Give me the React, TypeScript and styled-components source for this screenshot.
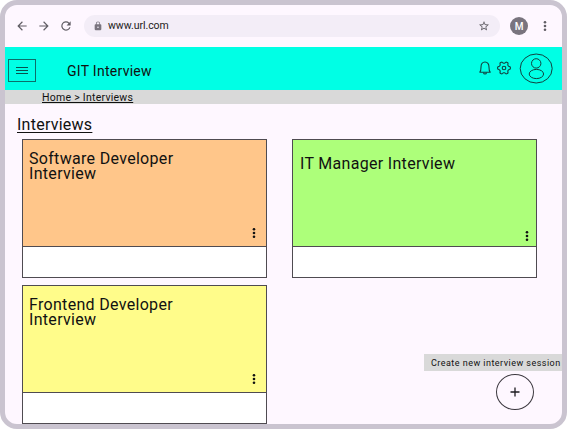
import React from "react";
import styled, { createGlobalStyle } from "styled-components";

const GlobalStyle = createGlobalStyle`
  * { box-sizing: border-box; }
  body { margin: 0; background: #fff; font-family: Roboto, sans-serif; color: #111; }
  svg { display: block; flex: none; }
  button { padding: 0; background: none; border: 0; color: inherit; font: inherit; }
`;

const Frame = styled.div`
  position: relative;
  width: 567px;
  height: 429px;
  border: 5px solid #cac4d0;
  border-radius: 17px;
  background: #fef7ff;
  overflow: hidden;
`;

const BrowserBar = styled.div`
  display: flex;
  align-items: center;
  height: 42px;
  padding: 0 10px 0 10px;
`;

const NavButtons = styled.div`
  display: flex;
  gap: 8px;
  width: 69px;
`;

const AddressBar = styled.div`
  display: flex;
  align-items: center;
  width: 416px;
  height: 22px;
  padding: 0 10px 0 9px;
  border-radius: 11px;
  background: #f3edf7;
`;

const Url = styled.span`
  flex: 1;
  margin-left: 5px;
  font-size: 10.5px;
  line-height: 14px;
  letter-spacing: -0.04px;
  color: #1d1b20;
`;

const Profile = styled.span`
  display: grid;
  place-items: center;
  width: 18px;
  height: 18px;
  margin: 0 15px 0 10px;
  border-radius: 50%;
  background: #79747e;
  color: #fff;
  font-size: 10px;
  font-weight: 500;
`;

const Header = styled.header`
  display: flex;
  align-items: center;
  height: 43px;
  padding: 0 9px 0 3px;
  background: #00ffe5;
`;

const MenuButton = styled.button`
  display: grid;
  place-items: center;
  width: 28px;
  height: 23px;
  margin-top: 4px;
  border: 1px solid #0b6f6a;
`;

const Title = styled.h1`
  flex: 1;
  margin: 5px 0 0 31px;
  font-size: 14px;
  font-weight: 400;
  letter-spacing: 0.28px;
`;

const Actions = styled.div`
  display: flex;
  align-items: center;
  margin-top: -1px;
`;

const Breadcrumb = styled.nav`
  height: 14px;
  padding-left: 37px;
  background: #d9d9d9;
  font-size: 10.5px;
  line-height: 15px;
  letter-spacing: 0.26px;
  text-decoration: underline;
`;

const Heading = styled.h2`
  margin: 11px 0 4px 12px;
  font-size: 16px;
  line-height: 20px;
  font-weight: 400;
  letter-spacing: 0.25px;
  text-decoration: underline;
  text-decoration-thickness: 1px;
  text-underline-offset: 2px;
`;

const CardGrid = styled.main`
  display: grid;
  grid-template-columns: 245px 245px;
  gap: 7px 25px;
  padding-left: 17px;
`;

const Card = styled.article`
  height: 139px;
  border: 1px solid #4f4b51;
  background: #fff;
`;

const CardTop = styled.div<{ $color: string; $low?: boolean }>`
  display: flex;
  flex-direction: column;
  justify-content: space-between;
  height: 107px;
  padding: ${(p) => (p.$low ? "16px 7px 4px" : "11px 10px 7px 6px")};
  border-bottom: 1px solid #4f4b51;
  background: ${(p) => p.$color};
`;

const CardTitle = styled.h3`
  max-width: 165px;
  margin: 0;
  font-size: 16px;
  line-height: 15px;
  font-weight: 400;
  letter-spacing: 0.31px;
`;

const MoreButton = styled.button`
  align-self: flex-end;
`;

const Floating = styled.div`
  position: absolute;
  right: 0;
  bottom: 14px;
  display: flex;
  flex-direction: column;
  align-items: flex-end;
`;

const Hint = styled.span`
  width: 138px;
  height: 17px;
  margin-bottom: 3px;
  padding-left: 7px;
  background: #d9d9d9;
  font-size: 9px;
  line-height: 19px;
  letter-spacing: 0.47px;
  white-space: nowrap;
`;

const AddButton = styled.button`
  display: grid;
  place-items: center;
  width: 38px;
  height: 36px;
  margin-right: 28px;
  border: 1px solid #3d3940;
  border-radius: 50%;
`;

const NavIcon = ({ d }: { d: string }) => (
  <svg width="14" height="14" viewBox="0 0 24 24" fill="#605d64"><path d={d} /></svg>
);

const Dots = ({ color = "#111" }: { color?: string }) => (
  <svg width="4" height="12" viewBox="0 0 4 12" fill={color}>
    <circle cx="2" cy="2.2" r="1.3" />
    <circle cx="2" cy="6" r="1.3" />
    <circle cx="2" cy="9.8" r="1.3" />
  </svg>
);

const gear = Array.from({ length: 73 }, (_, i) => {
  const a = (i / 72) * Math.PI * 2;
  const wave = Math.cos(a * 6);
  const r = 5.6 + 0.85 * Math.tanh(wave * 2);
  return `${(7 + r * Math.cos(a)).toFixed(2)},${(7 + r * Math.sin(a)).toFixed(2)}`;
}).join(" ");

const cards = [
  { title: "Software Developer Interview", color: "#ffc68a" },
  { title: "IT Manager Interview", color: "#adff7a", low: true },
  { title: "Frontend Developer Interview", color: "#fffc8a" },
];

export default function App() {
  return (
    <>
      <GlobalStyle />
      <Frame>
        <BrowserBar>
          <NavButtons>
            <NavIcon d="M20 11H7.8l5.6-5.6L12 4l-8 8 8 8 1.4-1.4L7.8 13H20z" />
            <NavIcon d="m12 4-1.4 1.4 5.6 5.6H4v2h12.2l-5.6 5.6L12 20l8-8z" />
            <NavIcon d="M17.65 6.35A8 8 0 1 0 19.73 14h-2.08A6 6 0 1 1 12 6c1.66 0 3.14.69 4.22 1.78L13 11h7V4z" />
          </NavButtons>
          <AddressBar>
            <svg width="10" height="10" viewBox="0 0 24 24" fill="#79747e">
              <path fillRule="evenodd" d="M18 8h-1V6A5 5 0 0 0 7 6v2H6a2 2 0 0 0-2 2v10c0 1.1.9 2 2 2h12a2 2 0 0 0 2-2V10a2 2 0 0 0-2-2zm-6 9a2 2 0 1 1 0-4 2 2 0 0 1 0 4zm3.1-9H8.9V6a3.1 3.1 0 0 1 6.2 0z" />
            </svg>
            <Url>www.url.com</Url>
            <svg width="12" height="12" viewBox="0 0 24 24" fill="#605d64">
              <path d="m22 9.24-7.19-.62L12 2 9.19 8.63 2 9.24l5.46 4.73L5.82 21 12 17.27 18.18 21l-1.63-7.03zM12 15.4l-3.76 2.27 1-4.28-3.32-2.88 4.38-.38L12 6.1l1.71 4.04 4.38.38-3.32 2.88 1 4.28z" />
            </svg>
          </AddressBar>
          <Profile>M</Profile>
          <Dots color="#605d64" />
        </BrowserBar>
        <Header>
          <MenuButton aria-label="Menu">
            <svg width="12" height="9" viewBox="0 0 12 9" fill="none" stroke="#07524e">
              <path d="M0 1.5h12M0 4.5h12M0 7.5h12" />
            </svg>
          </MenuButton>
          <Title>GIT Interview</Title>
          <Actions>
            <svg width="12" height="14" viewBox="0 0 12 14" fill="none" stroke="#12413f" strokeWidth="1.1">
              <path d="M.8 11.2h10.4C10.1 10 10 8.7 10 6.2 10 3 8.5 1 6 1S2 3 2 6.2c0 2.5-.1 3.8-1.2 5z" strokeLinejoin="round" />
              <path d="M4.5 11.6c.2 1.8 2.8 1.8 3 0" />
            </svg>
            <svg width="28" height="14" viewBox="-6 0 28 14" fill="none" stroke="#12413f" strokeWidth="1.1">
              <polyline points={gear} />
              <circle cx="7" cy="7" r="1.8" />
            </svg>
            <svg width="34" height="31" viewBox="0 0 34 31" fill="none" stroke="#12413f">
              <ellipse cx="17.2" cy="15.5" rx="16" ry="14.5" />
              <circle cx="17.2" cy="10.4" r="4.7" />
              <ellipse cx="17.4" cy="21" rx="7.2" ry="4.6" />
            </svg>
          </Actions>
        </Header>
        <Breadcrumb>Home &gt; Interviews</Breadcrumb>
        <Heading>Interviews</Heading>
        <CardGrid>
          {cards.map((card) => (
            <Card key={card.title}>
              <CardTop $color={card.color} $low={card.low}>
                <CardTitle>{card.title}</CardTitle>
                <MoreButton aria-label="More"><Dots /></MoreButton>
              </CardTop>
            </Card>
          ))}
        </CardGrid>
        <Floating>
          <Hint>Create new interview session</Hint>
          <AddButton aria-label="Create">
            <svg width="10" height="10" viewBox="0 0 10 10" stroke="#1d1b20" strokeWidth="1.3">
              <path d="M5 .5v9M.5 5h9" />
            </svg>
          </AddButton>
        </Floating>
      </Frame>
    </>
  );
}
